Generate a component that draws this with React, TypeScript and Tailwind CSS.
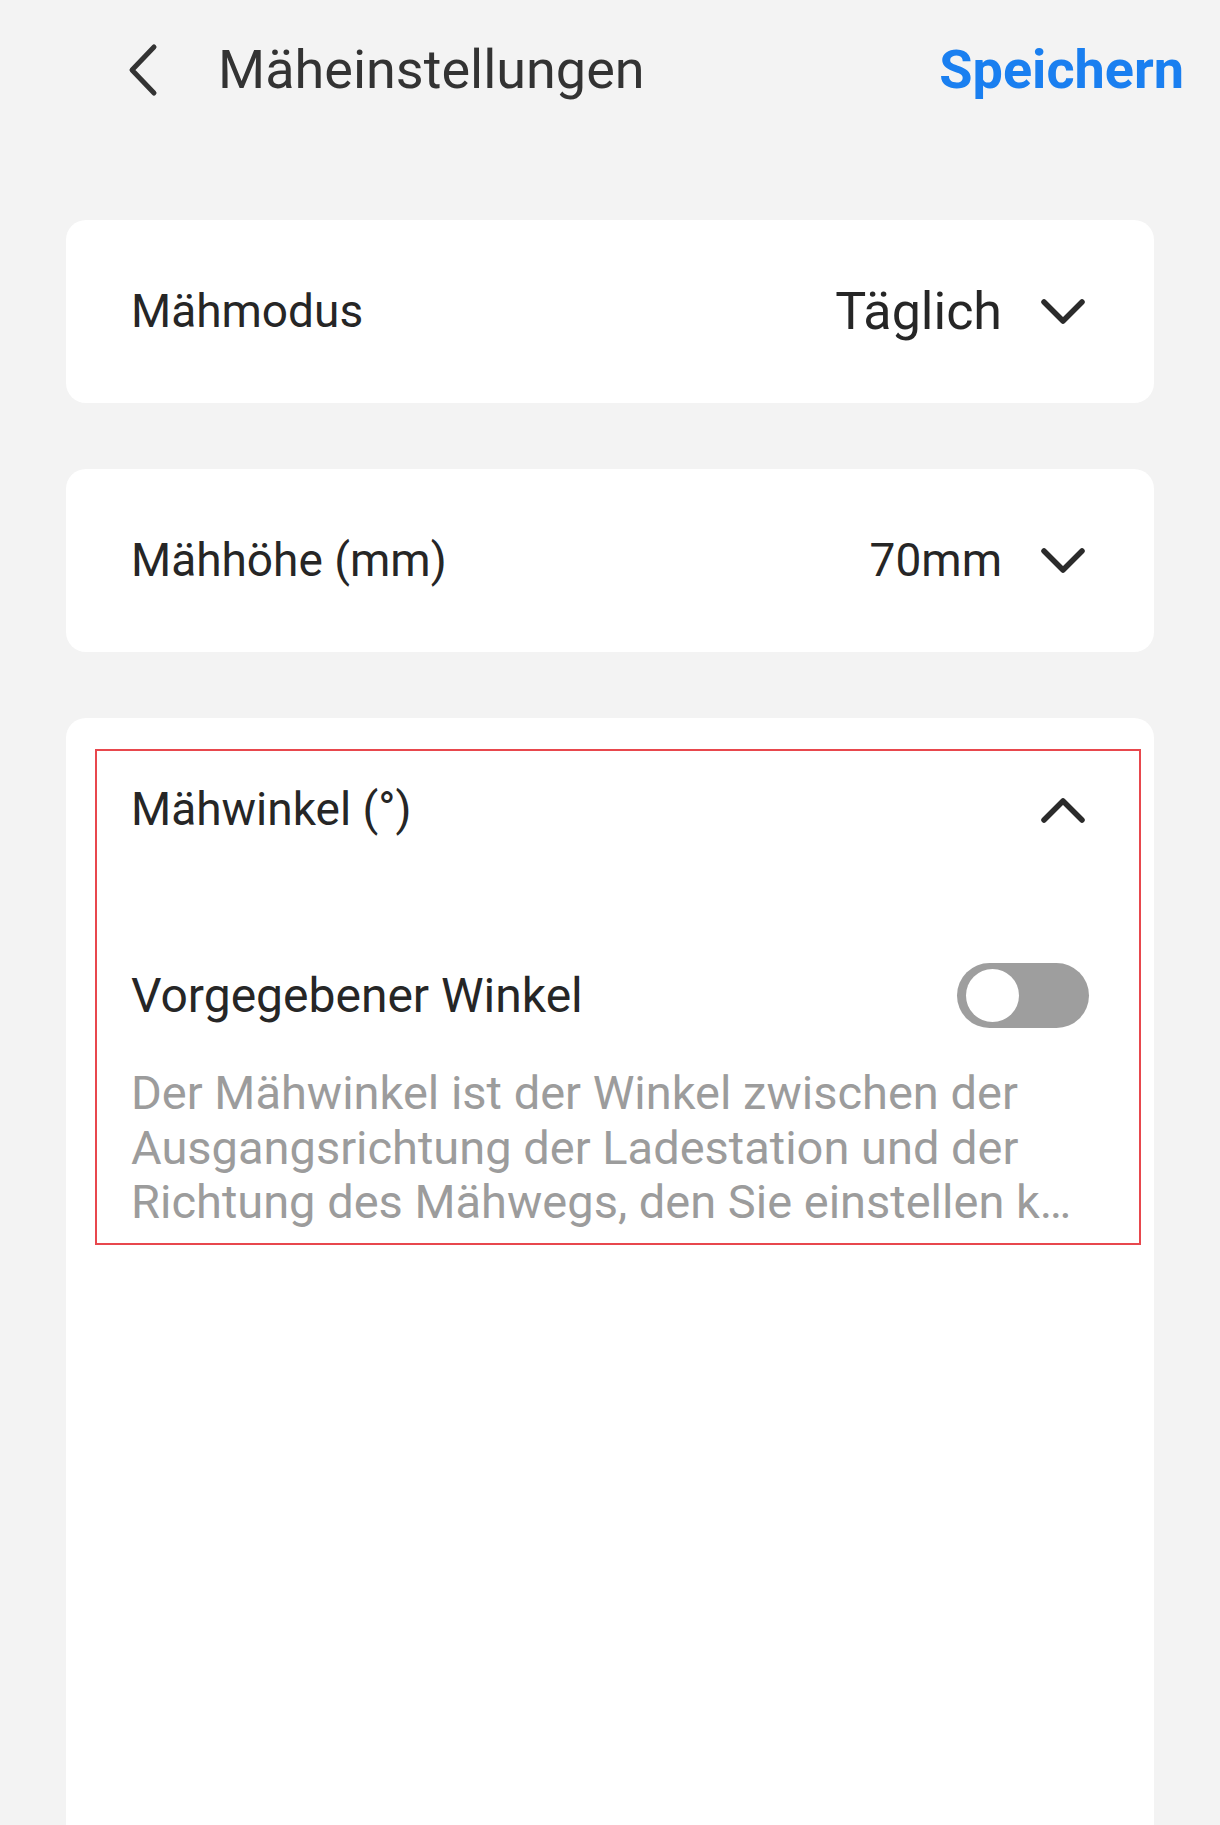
import React from 'react';

const font = { fontFamily: 'Roboto, "Noto Sans", sans-serif' };

const Chevron: React.FC<{ up?: boolean }> = ({ up }) => (
  <svg width="46" height="28" viewBox="0 0 46 28" className="shrink-0">
    <polyline
      points={up ? '4,24 23,5 42,24' : '4,4 23,23 42,4'}
      fill="none"
      stroke="#2b2b2b"
      strokeWidth="5.5"
      strokeLinecap="round"
      strokeLinejoin="round"
    />
  </svg>
);

const SelectCard: React.FC<{ label: string; value: string; big?: boolean }> = ({ label, value, big }) => (
  <div className="bg-white rounded-[20px] h-[183px] flex items-center pl-[65px] pr-[68px]">
    <span className="flex-1 text-[46px] text-[#262626]">{label}</span>
    <span className={big ? 'text-[52px] text-[#262626] mr-[38px]' : 'text-[46px] text-[#262626] mr-[38px]'}>{value}</span>
    <Chevron />
  </div>
);

const descLines = [
  'Der Mähwinkel ist der Winkel zwischen der',
  'Ausgangsrichtung der Ladestation und der',
  'Richtung des Mähwegs, den Sie einstellen k…',
];

export default function App() {
  return (
    <div className="w-[1220px] h-[1825px] overflow-hidden bg-[#f3f3f3]" style={font}>
      {/* header */}
      <div className="h-[140px] flex items-center pl-[126px] pr-[36px]">
        <svg width="34" height="56" viewBox="0 0 34 56" className="shrink-0">
          <polyline
            points="28,5 6,28 28,51"
            fill="none"
            stroke="#333333"
            strokeWidth="5"
            strokeLinecap="round"
            strokeLinejoin="round"
          />
        </svg>
        <h1 className="ml-[58px] flex-1 text-[54px] text-[#333333] leading-none">Mäheinstellungen</h1>
        <button className="text-[54px] font-bold text-[#1a7ff0] leading-none">Speichern</button>
      </div>

      <div className="px-[66px] pt-[80px] flex flex-col gap-[66px]">
        <SelectCard label="Mähmodus" value="Täglich" big />
        <SelectCard label="Mähhöhe (mm)" value="70mm" />

        <div className="relative bg-white rounded-[20px] h-[1200px]">
          <div className="h-[183px] flex items-center pl-[65px] pr-[68px]">
            <span className="flex-1 text-[46px] text-[#262626]">Mähwinkel (°)</span>
            <Chevron up />
          </div>
          <div className="pl-[65px] pr-[65px]">
            <div className="mt-[62px] h-[65px] flex items-center justify-between">
              <span className="text-[48px] text-[#262626]">Vorgegebener Winkel</span>
              <div className="w-[132px] h-[65px] rounded-full bg-[#9e9e9e] flex items-center pl-[9px]">
                <div className="w-[53px] h-[53px] rounded-full bg-white" />
              </div>
            </div>
            <div className="mt-[38px] text-[47px] leading-[54.5px] text-[#9c9c9c]">
              {descLines.map(l => (
                <div key={l} className="whitespace-nowrap">{l}</div>
              ))}
            </div>
          </div>
          {/* highlight frame */}
          <div className="absolute left-[29px] top-[31px] w-[1046px] h-[496px] border-2 border-[#e8474d] pointer-events-none" />
        </div>
      </div>
    </div>
  );
}
